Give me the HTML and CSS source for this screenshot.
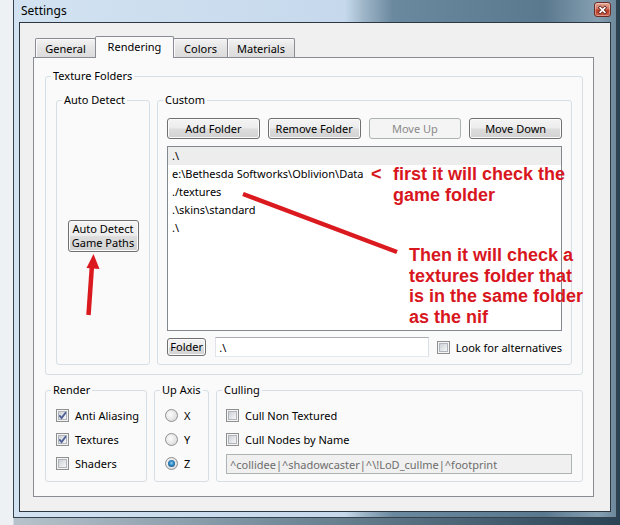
FILE: index.html
```html
<!DOCTYPE html>
<html lang="en">
<head>
  <meta charset="UTF-8">
  <title>Settings</title>
  <link rel="stylesheet" href="styles.css">
</head>
<body>
  <div class="window">
    <div class="titlebar">
      <span class="title">Settings</span>
      <span class="close">
        <svg width="16" height="14" viewBox="0 0 16 14">
          <path d="M5.5 4.5 L10.5 9.5 M10.5 4.5 L5.5 9.5" stroke="#5a1a12" stroke-width="3.4" stroke-linecap="square"/>
          <path d="M5.5 4.5 L10.5 9.5 M10.5 4.5 L5.5 9.5" stroke="#fff" stroke-width="1.8" stroke-linecap="square"/>
        </svg>
      </span>
    </div>

    <div class="client">
      <div class="tabs">
        <div class="tab tab-general">General</div>
        <div class="tab tab-rendering active">Rendering</div>
        <div class="tab tab-colors">Colors</div>
        <div class="tab tab-materials">Materials</div>
      </div>

      <div class="panel">
        <fieldset class="group">
          <legend>Texture Folders</legend>
          <div class="folders-body">
            <fieldset class="group auto-detect">
              <legend>Auto Detect</legend>
              <div class="auto-body">
                <button class="btn btn-tall">Auto Detect<br>Game Paths</button>
              </div>
            </fieldset>

            <fieldset class="group custom">
              <legend>Custom</legend>
              <div class="custom-body">
                <div class="btn-row">
                  <button class="btn">Add Folder</button>
                  <button class="btn">Remove Folder</button>
                  <button class="btn" disabled>Move Up</button>
                  <button class="btn">Move Down</button>
                </div>
                <ul class="list">
                  <li class="selected">.\</li>
                  <li>e:\Bethesda Softworks\Oblivion\Data</li>
                  <li>./textures</li>
                  <li>.\skins\standard</li>
                  <li>.\</li>
                </ul>
                <div class="folder-row">
                  <button class="btn btn-small">Folder</button>
                  <input class="field folder-field" type="text" value=".\">
                  <span class="cb"><span class="cb-in"></span></span>
                  <span class="label">Look for alternatives</span>
                </div>
              </div>
            </fieldset>
          </div>
        </fieldset>

        <div class="bottom-row">
          <fieldset class="group render">
            <legend>Render</legend>
            <div class="opt-body">
              <div class="opt"><span class="cb"><span class="cb-in"><svg width="9" height="9" viewBox="0 0 9 9"><path d="M1.3 4.4 L3.6 7 L7.9 1.3" fill="none" stroke="#4a5e94" stroke-width="1.8"/></svg></span></span><span class="label">Anti Aliasing</span></div>
              <div class="opt"><span class="cb"><span class="cb-in"><svg width="9" height="9" viewBox="0 0 9 9"><path d="M1.3 4.4 L3.6 7 L7.9 1.3" fill="none" stroke="#4a5e94" stroke-width="1.8"/></svg></span></span><span class="label">Textures</span></div>
              <div class="opt"><span class="cb"><span class="cb-in"></span></span><span class="label">Shaders</span></div>
            </div>
          </fieldset>

          <fieldset class="group up-axis">
            <legend>Up Axis</legend>
            <div class="opt-body">
              <div class="opt"><span class="radio"></span><span class="label">X</span></div>
              <div class="opt"><span class="radio"></span><span class="label">Y</span></div>
              <div class="opt"><span class="radio on"></span><span class="label">Z</span></div>
            </div>
          </fieldset>

          <fieldset class="group culling">
            <legend>Culling</legend>
            <div class="opt-body cull-body">
              <div class="opt"><span class="cb"><span class="cb-in"></span></span><span class="label">Cull Non Textured</span></div>
              <div class="opt"><span class="cb"><span class="cb-in"></span></span><span class="label">Cull Nodes by Name</span></div>
              <input class="field cull-field" type="text" value="^collidee|^shadowcaster|^\!LoD_cullme|^footprint" disabled>
            </div>
          </fieldset>
        </div>
      </div>
    </div>
  </div>

  <!-- red notes drawn over the screenshot -->
  <svg class="marks" width="620" height="525" viewBox="0 0 620 525">
    <path d="M243 194 L397 252" stroke="#db1a1f" stroke-width="4.5"/>
    <path d="M88.5 315 L92 265" stroke="#db1a1f" stroke-width="4.5"/>
    <path d="M93.5 254 L99.5 269 L86.5 268 Z" fill="#db1a1f"/>
  </svg>
  <div class="note note-lt">&lt;</div>
  <div class="note note-one">first it will check the<br>game folder</div>
  <div class="note note-two">Then it will check a<br>textures folder that<br>is in the same folder<br>as the nif</div>
</body>
</html>
```

FILE: styles.css
```css
* {
  box-sizing: border-box;
}

html, body {
  margin: 0;
}

body {
  position: relative;
  width: 620px;
  height: 525px;
  overflow: hidden;
  font-family: "Noto Sans", sans-serif;
  font-size: 11px;
  color: #000;
  background: linear-gradient(to right, #eef1f4 0, #eef1f4 13px, #b7c3cc 14px, #6f8797 300px, #2a4354 100%);
}

/* window frame */
.window {
  margin-left: 13px;
  width: 604px;
  height: 518px;
  border: 1px solid #34424e;
  border-top: none;
  padding: 0 5px 5px;
  display: flex;
  flex-direction: column;
  background: linear-gradient(to right, #d2e2f1 0%, #c6d9ec 55%, #9fb6c9 58%, #6a889e 63%, #5a788e 88%, #86a0b2 97%, #6d889b 100%);
}

.titlebar {
  height: 22px;
  flex-shrink: 0;
  display: flex;
  align-items: center;
  justify-content: space-between;
  padding-left: 2px;
}

.title {
  font-size: 12px;
  margin-top: -1px;
}

.close {
  display: flex;
  width: 17px;
  height: 15px;
  margin: -3px 0 0;
  border: 1px solid #6b2a22;
  border-radius: 3px;
  background: linear-gradient(#e4a896 0%, #d27563 45%, #bd3d28 55%, #c9604a 100%);
  box-shadow: inset 0 0 0 1px rgba(255, 255, 255, 0.35);
  align-items: center;
  justify-content: center;
}

.client {
  flex: 1;
  display: flex;
  flex-direction: column;
  border: 1px solid #2d3741;
  background: #f0f0f0;
  padding: 13px 16px 14px 13px;
}

/* tabs */
.tabs {
  height: 21px;
  display: flex;
  align-items: flex-end;
  padding-left: 2px;
  position: relative;
  z-index: 1;
}

.tab {
  height: 19px;
  border: 1px solid #898c95;
  border-bottom: none;
  border-radius: 2px 2px 0 0;
  background: linear-gradient(#f3f3f3, #e4e4e4 50%, #dcdcdc);
  box-shadow: inset 1px 1px 0 #fbfbfb;
  display: flex;
  align-items: center;
  justify-content: center;
  margin-right: -1px;
}

.tab-general { width: 61px; }
.tab-rendering { width: 79px; }
.tab-colors { width: 55px; }
.tab-materials { width: 68px; }

.tab.active {
  height: 22px;
  margin-bottom: -1px;
  background: #fafafa;
  box-shadow: none;
  padding-bottom: 3px;
  position: relative;
  z-index: 1;
}

.panel {
  flex: 1;
  border: 1px solid #898c95;
  background: #fafafa;
  padding: 10px 10px 13px 11px;
}

/* group boxes */
.group {
  margin: 0;
  padding: 0;
  min-width: 0;
  border: 1px solid #d5dfe5;
  border-radius: 3px;
}

.group > legend {
  padding: 0 2px;
  margin-left: 5px;
  line-height: 16px;
}

.folders-body {
  display: flex;
  gap: 7px;
  padding: 8px 10px 9px;
}

.auto-detect {
  width: 94px;
  flex-shrink: 0;
}

.auto-body {
  height: 256px;
  display: flex;
  align-items: center;
  justify-content: center;
}

.custom {
  flex: 1;
}

.custom-body {
  padding: 10px 9px 7px;
}

.btn-row {
  display: grid;
  grid-template-columns: repeat(4, 1fr);
  gap: 8px;
}

/* buttons */
.btn {
  font: inherit;
  color: #000;
  height: 21px;
  padding: 0;
  border: 1px solid #707070;
  border-radius: 3px;
  background: linear-gradient(#f4f4f4 0%, #ececec 48%, #dddddd 52%, #d2d2d2 100%);
  box-shadow: inset 0 0 0 1px #fbfbfb;
}

.btn:disabled {
  color: #8a8a8a;
  border-color: #adb2b5;
  background: #f4f4f4;
  box-shadow: none;
}

.btn-tall {
  width: 71px;
  height: 32px;
  line-height: 14px;
}

.btn-small {
  width: 40px;
  height: 18px;
  line-height: 14px;
}

/* list */
.list {
  list-style: none;
  margin: 7px 0 0;
  padding: 0;
  height: 185px;
  border: 1px solid #828790;
  background: #fff;
}

.list li {
  height: 18px;
  line-height: 18px;
  padding-left: 4px;
  white-space: nowrap;
}

.list li.selected {
  background: #ededed;
}

.folder-row {
  margin-top: 6px;
  height: 20px;
  display: flex;
  align-items: center;
}

.field {
  font: inherit;
  height: 20px;
  padding: 0 3px;
  border: 1px solid;
  border-color: #abadb3 #dbdfe6 #e3e9ef #e2e3ea;
  background: #fff;
  color: #000;
  outline: none;
}

.folder-field {
  width: 217px;
  margin: 0 8px 0 9px;
}

/* check boxes and radios */
.cb {
  width: 13px;
  height: 13px;
  flex-shrink: 0;
  border: 1px solid #8e8f8f;
  background: #f4f4f4;
  display: inline-flex;
  align-items: center;
  justify-content: center;
}

.cb-in {
  width: 9px;
  height: 9px;
  border: 1px solid #b0b5bb;
  background: linear-gradient(135deg, #cdd1d7, #f6f6f6);
  display: flex;
}

.cb-in svg {
  margin: -1px;
  overflow: visible;
}

.radio {
  width: 13px;
  height: 13px;
  flex-shrink: 0;
  border: 1px solid #8e8f8f;
  border-radius: 50%;
  background: radial-gradient(circle at 40% 40%, #fdfdfd 0%, #e6e6e6 55%, #cfd2d6 100%);
  display: inline-flex;
  align-items: center;
  justify-content: center;
}

.radio.on::after {
  content: "";
  width: 7px;
  height: 7px;
  border-radius: 50%;
  background: radial-gradient(circle at 50% 45%, #8fd0f5 0%, #2c82bd 45%, #16456d 100%);
}

.label {
  margin-left: 6px;
  white-space: nowrap;
}

/* bottom row */
.bottom-row {
  margin-top: 7px;
  display: flex;
  gap: 7px;
}

.render {
  width: 102px;
}

.up-axis {
  width: 55px;
}

.culling {
  flex: 1;
}

.opt-body {
  padding: 5px 10px 6px;
}

.cull-body {
  padding: 5px 10px 7px 9px;
}

.opt {
  height: 24px;
  display: flex;
  align-items: center;
}

.cull-field {
  display: block;
  width: 100%;
  margin-top: 3px;
  color: #6d6d6d;
  background: #f0f0f0;
  border-color: #adb2b5;
}

/* red annotations */
.marks {
  position: absolute;
  left: 0;
  top: 0;
  pointer-events: none;
}

.note {
  position: absolute;
  font-family: "Liberation Sans", Arial, sans-serif;
  font-weight: bold;
  font-size: 18px;
  color: #d8161d;
  white-space: nowrap;
}

.note-lt {
  left: 371px;
  top: 164px;
  line-height: 21px;
}

.note-one {
  left: 393px;
  top: 164px;
  line-height: 21px;
}

.note-two {
  left: 409px;
  top: 245px;
  line-height: 20.5px;
}
```
